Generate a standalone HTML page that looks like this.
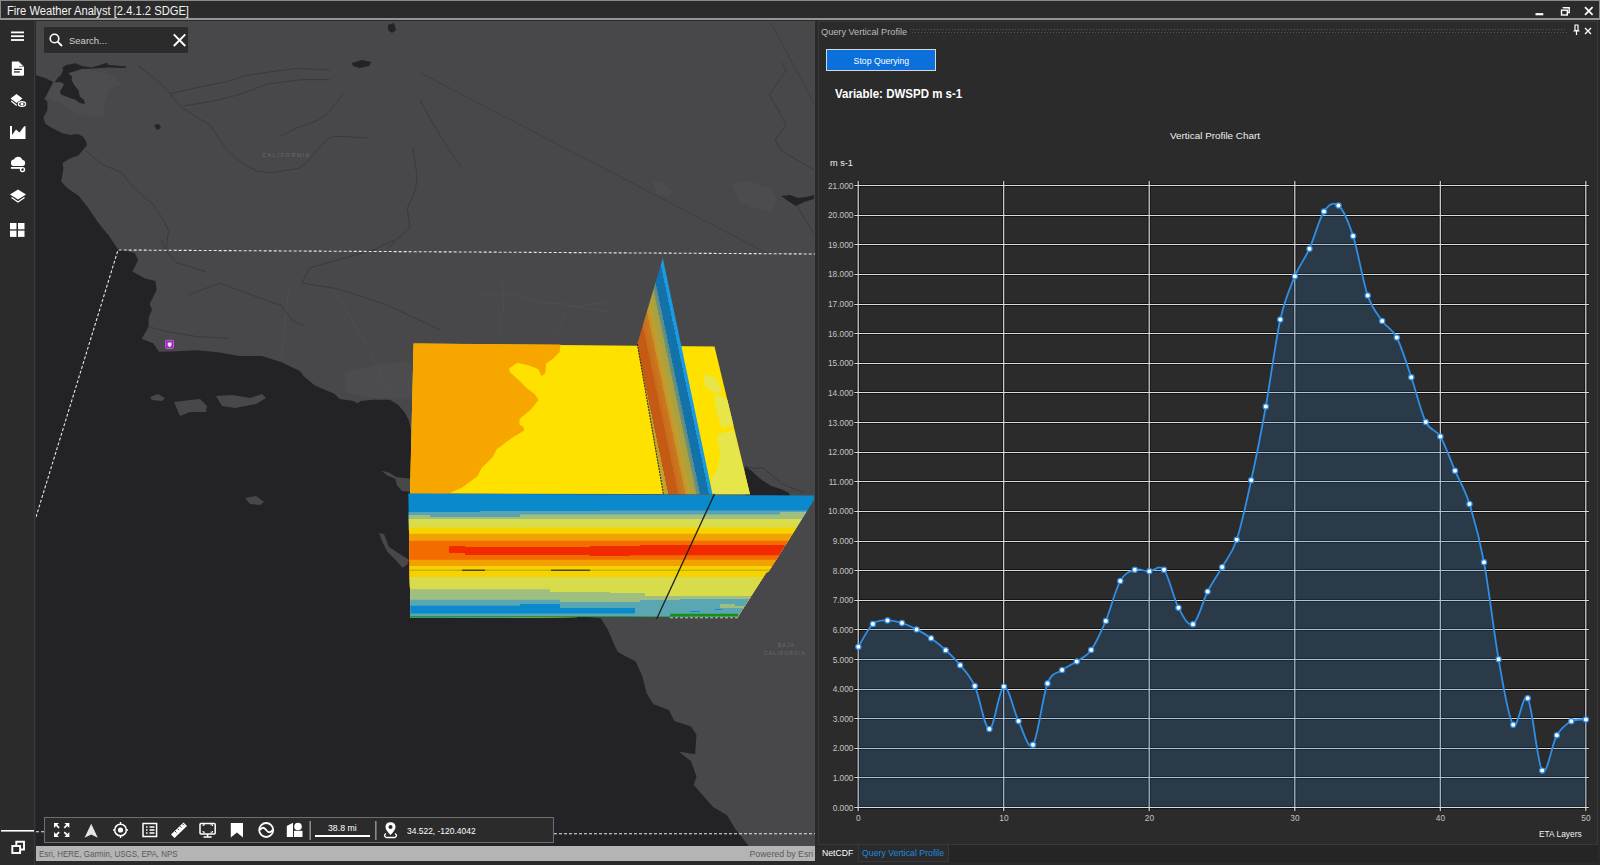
<!DOCTYPE html>
<html><head><meta charset="utf-8">
<style>
*{box-sizing:border-box}
html,body{margin:0;padding:0}
body{width:1600px;height:865px;position:relative;overflow:hidden;background:#2a2a2a;font-family:"Liberation Sans",sans-serif}
.abs{position:absolute}
.yl{font-family:"Liberation Sans",sans-serif;font-size:8.3px;fill:#c4c4c4}
.t{position:absolute;white-space:nowrap;line-height:1}
#title{left:0;top:0;width:1600px;height:20px;background:#2b2b2b;border:1px solid #8a8a8a;border-bottom:2px solid #959595}
#sidebar{left:0;top:20px;width:35px;height:845px;background:#2b2b2b;border-right:1px solid #39393c}
#mapwrap{left:36px;top:21px;width:779px;height:825px;overflow:hidden;background:#48484b}
#attr{left:36px;top:846px;width:779px;height:15px;background:#b4b4b4;font-size:9.5px;color:#5a5a5a}
#panel{left:818px;top:21px;width:780px;height:824px;background:#2b2b2b;border:1px solid #39393c}
#search{left:44px;top:27px;width:144px;height:26px;background:#2b2b2b}
#toolbar{left:44px;top:817px;width:510px;height:26px;background:#2b2b2b;border:1.5px solid #6e6e6e}
#btn{left:826px;top:49px;width:110px;height:22px;background:#0b6fdc;border:1.5px solid #d6d6d6;color:#fff;font-size:9.5px;text-align:center;line-height:21px}
#btn span{display:inline-block;transform:scaleX(0.915)}
#tabs{left:818px;top:845px;width:780px;height:17px;background:#252526}
</style></head><body>
<div id="title" class="abs"><span class="t" style="left:6px;top:4px;font-size:12.5px;color:#f2f2f2;transform:scaleX(0.895);transform-origin:0 0">Fire Weather Analyst [2.4.1.2 SDGE]</span>
<svg class="abs" style="left:0;top:0" width="1600" height="20" viewBox="0 0 1600 20">
<path d="M1534.5,13.2 H1542.3" stroke="#fff" stroke-width="2.2"/>
<g fill="none" stroke="#fff" stroke-width="1.4"><rect x="1560.5" y="9.2" width="5.8" height="4.8"/><path d="M1562.3,7.3 V6.7 H1568.2 V11.5 H1566.5"/></g>
<path d="M1584,6.2 L1591.6,13.8 M1591.6,6.2 L1584,13.8" stroke="#fff" stroke-width="1.7"/>
</svg>
</div>
<div id="sidebar" class="abs">
<svg class="abs" style="left:0;top:-20px" width="35" height="865" viewBox="0 0 35 865">
<g fill="#fff">
<rect x="11" y="31.5" width="13" height="1.8"/><rect x="11" y="35.3" width="13" height="1.8"/><rect x="11" y="39.1" width="13" height="1.8"/>
<path d="M12.5,61.5 H19 L24,66.5 V74.5 Q24,75.8 22.8,75.8 H13 Q11.8,75.8 11.8,74.5 V62.8 Q11.8,61.5 12.5,61.5 Z"/>
<path d="M10.5,98.5 L16.5,94 L22.5,98.5 L16.5,103 Z"/>
<path d="M10.8,101.6 L11.6,100.6 L17.2,104.9 L16.4,105.9 Z"/>
<path d="M10,126 L12,126 L12,135 L16,129.5 L19.5,132.5 L24,126.5 L25.5,126 L25.5,139 L10,139 Z"/>
<path d="M11,163 Q10.7,159.7 13.8,159.4 Q15,156.8 18,156.8 Q21.3,156.8 22.3,159.8 Q25.1,160.3 25.1,163 Q25.1,165.9 22.5,165.9 H13.5 Q10.9,165.9 11,163 Z"/>
<rect x="10.9" y="167" width="11.3" height="1.8"/>
<path d="M16.5,189.5 L24.5,194.5 L16.5,199.5 L8.5,194.5 Z" transform="translate(1.5,0)"/>
<rect x="10" y="223" width="6.5" height="6.3"/><rect x="18" y="223" width="6.5" height="6.3"/><rect x="10" y="230.6" width="6.5" height="6.3"/><rect x="18" y="230.6" width="6.5" height="6.3"/>
<rect x="1" y="830" width="33" height="1.6"/>
</g>
<g fill="#2b2b2b">
<path d="M19,61.5 V66.5 H24 Z" fill="#2b2b2b"/>
<rect x="14" y="68.7" width="7.8" height="1.3"/><rect x="14" y="71.3" width="5.8" height="1.3"/>
</g>
<path d="M19,62 V66 H23" fill="#fff" stroke="none"/>
<g fill="none" stroke="#fff" stroke-width="1.3">
<ellipse cx="22" cy="104" rx="3.6" ry="2.4" fill="#2b2b2b"/>
<circle cx="22" cy="104" r="0.9" fill="#fff"/>
<circle cx="22.5" cy="169.6" r="2" stroke-width="1.4"/>
<path d="M11.5,197.5 L18,202 L24.5,197.5"/>
</g>
<g fill="none" stroke="#fff" stroke-width="1.9">
<rect x="12.3" y="846" width="7.8" height="7"/><path d="M16.3,845.5 V841.8 H24 V849.5 H20.5"/>
</g>
</svg>
</div>
<div id="mapwrap" class="abs">
<svg width="779" height="825" viewBox="36 21 779 825" style="position:absolute;left:0;top:0">
<rect x="36" y="21" width="779" height="825" fill="#48484b"/>
<!-- urban patches -->
<g fill="#4c4c4f">
<path d="M70.3,69.6 L88,69.6 L108.8,73.7 L121.3,84.1 L108.8,90.4 L103.6,105 L105.7,113.3 L100.5,117.4 L88,116.4 L75.5,113.3 L61,102.9 L48.5,98.7 L46.4,94.5 L53.7,82.1 Z"/>
<path d="M731,183 L750,181 L770,188 L778,200 L772,211 L752,208 L738,200 Z"/>
<path d="M653,181 L662,182 L672,192 L668,197 L656,193 Z"/>
<path d="M345,372 L375,366 L395,362 L412,362 L412,398 L370,398 L345,392 Z"/>
</g>
<!-- ocean -->
<path fill="#232227" d="M36,75.3 L42.2,76.9 L46.4,78.4 L53.2,82.1 L51.6,85.2 L47.4,93.5 L44.3,98.7 L47.4,101.8 L47.4,110.2 L43.3,117.4 L45.4,123.7 L51.6,127.8 L62,133 L70.3,135.1 L77.6,134.1 L82.8,136.2 L86,141.4 L87,145 L78.6,155.2 L69.3,158.7 L62.4,163.3 L63.5,167.9 L61.2,181.8 L68.1,188.7 L78.6,195.7 L87.8,207.2 L97.1,221.1 L104,230 L109.2,236 L117.3,248.5 L134.7,253.1 L138.2,260 L132.4,271.6 L145.1,278.6 L155.5,280.9 L156.6,290.1 L149.7,304 L152,309.8 L148.6,317.9 L148.6,327.1 L141.6,338.7 L153.2,343.3 L159,351.8 L171.7,351.5 L197.1,350.3 L220.2,352.5 L238.7,356 L261.8,356 L280.3,361.8 L300,371 L303.5,375.9 L314.8,385.6 L334.2,393.7 L340,399 L353.5,401 L357.7,403.3 L360.8,401 L373.3,399.7 L390,399.7 L398.3,405 L404.5,412.2 L408.7,420 L412,434 L412,600 L600.8,618.3 L607.7,629.4 L617.4,651.6 L624.4,655.8 L635.5,661.3 L642.4,676.6 L646.6,693.2 L653.5,704.3 L668.8,709.9 L674.3,721 L691,726.5 L696.5,734.8 L695.1,754.2 L678.5,751.5 L691,761.2 L696.5,776.4 L693.7,784.8 L702,794.5 L713.1,807 L727,815.3 L735.3,829.1 L746.4,843 L752,850 L36,850 Z"/>
<!-- SF bay -->
<path fill="#232227" d="M62.5,67.5 L66.2,64.9 L75.5,63.3 L81.8,65.9 L84.9,66.4 L91.2,67.5 L98.4,65.4 L106.8,62.8 L108.8,64.9 L126,66.4 L126,68 L108.8,67.5 L92.2,68.5 L81.8,69 L71.4,72.2 L68.3,73.2 L72.4,76.9 L71.4,80 L74.5,85.2 L78.7,90.4 L79.7,96.6 L83.9,99.7 L84.9,103.9 L79.7,102.9 L75.5,99.7 L69.3,97.7 L61,94.5 L59.9,91.4 L62,88.3 L64.1,84.1 L59.9,82.1 L54.7,82.6 L56.8,78.9 L61,74.8 L63.1,70.6 Z"/>
<!-- islands -->
<g fill="#48484b">
<path d="M150,397 L158,394 L165,398 L162,401 L152,400 Z"/>
<path d="M174,402 L190,400 L200,399 L207,406 L206,412 L190,412 L180,416 Z"/>
<path d="M216,396 L232,395 L250,398 L262,394 L266,398 L256,404 L235,408 L222,406 Z"/>
<path d="M381.6,470.7 L388.8,472.4 L396.9,477.2 L410.7,478.8 L410.7,491.8 L401.8,491 L396.9,485.3 L395.3,478.8 L387.2,475.6 Z"/>
<path d="M379.1,533 L384,533.9 L388.8,546.8 L398.5,553.3 L409,559.7 L407.4,564.6 L402.6,567.8 L395.3,559.7 L387.2,551.7 L381.6,540.3 Z"/>
<path d="M245,498 L256,496 L264,502 L260,505 L250,504 Z"/>
</g>
<!-- lakes -->
<g fill="#232227">
<path d="M352,63 L362,60 L371,62 L369,66 L360,68 L353,66 Z"/>
<path d="M388,25 L394,23 L396,30 L392,33 L388,30 Z"/>
<path d="M154,125 L159,124 L161,128 L157,130 Z"/>
<path d="M781,196 L790,195 L798,198 L806,197 L814,195 L814,199 L804,202 L796,206 L788,201 Z"/>
</g>
<!-- borders / rivers -->
<g fill="none" stroke="#525256" stroke-width="0.6"><path d="M300,253 L340,300 L375,360 L390,400"/><path d="M288.8,286.9 L281.3,360"/><path d="M480,294 L518,295 L535,302 L565,304 L570,306 L610,312"/><path d="M570,307 L610,302"/><path d="M566,313 L560,325 L548,340"/><path d="M502,280 L503.5,312 L480,312"/><path d="M499.5,312 L501,340"/></g>
<g fill="none" stroke="#3b3b3e" stroke-width="0.8">
<path d="M420,72.7 L766.7,253"/>
<path d="M770.9,22.8 L813.9,103.2"/>

</g>
<g fill="none" stroke="#353538" stroke-width="0.75">
<path d="M138.2,65.8 L157.6,81 L168.7,92.1 L179.8,106 L196.4,117.1 L210.3,125.4 L221.4,142 L229.7,153.1 L243.6,164.2 L257.5,171.2 L271.3,172.6 L299.1,168.4 L307.4,161.5 L324,142 L332.3,136.5 L343.4,136.5 L368.4,137.9"/>
<path d="M170,93.5 L202,86.6 L229.7,81 L246.4,75.5 L274.1,71.3 L296.3,68.5 L329.6,69.9"/>
<path d="M182.6,106 L210.3,101.8 L238,94.9 L268.6,83.8 L301.8,79.6 L329.6,79.6"/>
<path d="M343.4,93.5 L329.6,111.5 L318.5,119.9 L296.3,128.2 L279.7,136.5"/>
<path d="M85.5,150.4 L102.1,164.2 L121.5,172.6 L132.6,186.4 L141,194.8 L152,203.1 L163.2,219.7 L168.7,230.8 L165.9,250.2"/>
<path d="M412.8,147.6 L417,175.3 L415.6,189.2 L407.3,208.6 L410,228 L393.4,241.9 L385,253"/>
<path d="M420,100.4 L433.9,125.4 L447.7,147.6 L461.6,167"/>
<path d="M780.6,61.6 L786.2,69.9 L769.5,94.9 L780.6,114.3 L786.2,125.4 L775.1,139.3 L780.6,150.4 L813.9,169.8"/>
<path d="M797,206 L814,233.6"/>
<path d="M187.5,295.3 L219.4,283.1 L255,296.3 L281.3,305.6 L292.5,320.6 L303.8,325.3"/>
<path d="M150,327.2 L168.8,331.9 L196.9,336.6 L228.8,338.4"/>
<path d="M161.3,240 L165,249.4 L176.3,262.5 L206.3,271.9"/>
<path d="M393.8,240 L375,249.4 L309.4,268.1 L301.9,283.1 L337.5,288.8 L384.4,303.8 L440.6,330"/>
</g>
<!-- labels -->
<text x="262" y="157" font-family="Liberation Sans" font-size="5.5" letter-spacing="1.6" fill="#6a6a6e">CALIFORNIA</text>
<text x="778" y="647" font-family="Liberation Sans" font-size="5" letter-spacing="1.2" fill="#6a6a6e">BAJA</text>
<text x="764" y="655" font-family="Liberation Sans" font-size="5" letter-spacing="1.2" fill="#6a6a6e">CALIFORNIA</text>
<!-- dashed extent -->
<path d="M36,517 L118,250 L816,254" fill="none" stroke="#e8e8e8" stroke-width="1.1" stroke-dasharray="3,2"/>
<path d="M36,831.8 L44,831.8 M554,833.8 L816,833.8" fill="none" stroke="#e8e8e8" stroke-width="1.1" stroke-dasharray="3,2"/>
<defs>
<clipPath id="fs"><path d="M408.3,493.5 L814,495.5 L814,500 L769,571 L766,573 L738,616.5 L410.5,617.5 Z"/></clipPath>
<linearGradient id="vg" gradientUnits="userSpaceOnUse" x1="712.5" y1="494.2" x2="665.5" y2="504.1">
<stop offset="0" stop-color="#1a9ae0"/><stop offset="0.07" stop-color="#1a9ae0"/>
<stop offset="0.07" stop-color="#1472aa"/><stop offset="0.25" stop-color="#1472aa"/>
<stop offset="0.25" stop-color="#4f8a90"/><stop offset="0.33" stop-color="#7a9470"/>
<stop offset="0.33" stop-color="#a8a040"/><stop offset="0.45" stop-color="#b0a23c"/>
<stop offset="0.45" stop-color="#c0a030"/><stop offset="0.55" stop-color="#c49428"/>
<stop offset="0.55" stop-color="#cc7a20"/><stop offset="0.7" stop-color="#c86a1c"/>
<stop offset="0.7" stop-color="#c45a14"/><stop offset="0.9" stop-color="#c45a14"/>
<stop offset="0.9" stop-color="#bca02c"/><stop offset="1" stop-color="#c0a82e"/>
</linearGradient>
</defs>
<path fill="#232227" d="M744.9,466.4 L751.5,470.7 L755.9,475.1 L762.5,480.6 L771.3,486.1 L782.2,489.4 L788.8,492.7 L790,496 L745,496 Z"/>
<path d="M744.9,466.4 L753.7,468.5 L762.5,467.5 L771.3,475 L782,484 L804,492.7" fill="none" stroke="#333336" stroke-width="0.8"/>
<!-- flat slice -->
<path fill="#ffe100" d="M413.6,343.6 L714.5,346.4 L750,494.3 L410,493.6 Z"/>
<path fill="#f7a600" d="M413.6,343.6 L560.5,344.5 L559.5,352.2 L553.8,357.9 L546.2,363.6 L545.2,373.2 L541.4,376.0 L538.5,369.3 L529.0,365.5 L517.6,362.7 L509.0,368.4 L509.9,372.2 L519.5,380.8 L527.1,388.4 L534.7,394.1 L538.5,399.9 L530.9,409.4 L519.5,418.9 L519.5,424.7 L523.3,426.6 L524.2,430.4 L511.8,438.0 L496.6,449.5 L492.8,457.1 L481.3,468.5 L477.5,476.2 L462.2,487.6 L448.9,493.6 L410.0,493.6 Z"/>
<path fill="#e6e64a" d="M704,374 L716,378 L722,392 L712,392 L704,385 Z"/>
<path fill="#e6e64a" d="M714,392 L727.4,400 L733.4,425 L722,428 L716,410 Z"/>
<path fill="#e6e64a" d="M717,435 L734,430 L750,494.3 L712.5,494.2 L711,478 L717,470 L720,455 Z"/>
<!-- vertical slice -->
<path fill="url(#vg)" d="M662.8,258.1 L712.5,494.2 L663.4,494.2 L637.3,344 Z"/>
<path d="M637.3,344 L663.4,494.2" stroke="#222" stroke-width="1" stroke-dasharray="2,1"/>
<!-- front slice -->
<g clip-path="url(#fs)">
<path fill="#0b89cd" d="M400,490 H820 V620 H400 Z"/>
<path fill="#58a4b4" d="M400,512 L480,512 L480,511 L600,511 L600,510.5 L820,510.5 V620 H400 Z"/>
<path fill="#9fc080" d="M400,515 L430,515 L430,517 L520,517 L520,514.5 L780,514.5 L780,512 L820,512 V620 H400 Z"/>
<path fill="#d9dc4b" d="M400,519 H820 V620 H400 Z"/>
<path fill="#f5d400" d="M400,527.5 H820 V620 H400 Z"/>
<path fill="#f2a100" d="M400,533.8 H820 V620 H400 Z"/>
<path fill="#f26c00" d="M400,540.7 H820 V620 H400 Z"/>
<path fill="#f12a00" d="M449,546 L465,546 L465,547 L590,547 L590,546 L640,546 L640,545 L820,545 L820,555.5 L630,555.5 L630,556 L590,556 L590,555 L465,555 L465,553 L449,553 Z"/>
<path fill="#f26c00" d="M400,555.3 L449,555.3 L449,553 L465,553 L465,555 L590,555 L590,556 L630,556 L630,555.5 L820,555.5 V620 H400 Z"/>
<path fill="#f1a000" d="M400,559.8 H820 V620 H400 Z"/>
<path fill="#f5d200" d="M400,566 H820 V620 H400 Z"/>
<path fill="#d8dc4a" d="M400,577.1 H820 V620 H400 Z"/>
<path fill="#9ebf80" d="M400,589.3 L550,589.3 L550,592 L610,592 L610,593 L645,593 L645,596 L820,596 V620 H400 Z"/>
<path fill="#5aa6b2" d="M400,599.7 L560,599.7 L560,602 L640,602 L640,600 L680,600 L680,599 L820,599 V620 H400 Z"/>
<path fill="#0b89cd" d="M400,605.8 L520,605.8 L520,604 L560,604 L560,608 L635,608 L635,620 L400,620 Z"/>
<path fill="#5aa6b2" d="M400,613.6 L635,613.6 V620 H400 Z"/>
<path fill="#14901c" d="M400,616.2 H670 V613.8 H738 V620 H400 Z"/>
<path fill="#9ebf80" d="M720,604 L735,604 L735,606 L745,606 L745,608 L720,608 Z"/>
<path fill="#0b89cd" d="M690,611 L700,611 L700,612 L690,612 Z M715,609 L722,609 L722,610 L715,610 Z"/>
<path d="M410,570.2 L770,570.2" stroke="#3a3a20" stroke-width="0.7" opacity="0.45"/><path d="M462,570.2 L485,570.2 M551,570.2 L590,570.2" stroke="#1a1a1a" stroke-width="1"/>
</g>
<path d="M714.5,494 L656.6,619" stroke="#1c1c1c" stroke-width="1.3"/>
<path d="M670,617.8 L738,617.8" stroke="#e8e8e8" stroke-width="1" stroke-dasharray="3,2" opacity="0.8"/>

<!-- purple marker -->
<rect x="165.6" y="340.3" width="7.9" height="8.2" rx="1" fill="#a322cb" stroke="#c46ae0" stroke-width="0.8"/>
<path d="M167.7,342.4 h3.8 v3.2 l-1.9,1.6 l-1.9,-1.6 z" fill="#e6eee0"/>
</svg>

</div>
<div id="search" class="abs">
<svg class="abs" style="left:0;top:0" width="144" height="26">
<circle cx="10.5" cy="11.5" r="4.3" fill="none" stroke="#fff" stroke-width="1.6"/><path d="M13.6,14.6 L18,19" stroke="#fff" stroke-width="1.8"/>
<path d="M129.8,7.3 L141.3,19 M141.3,7.3 L129.8,19" stroke="#fff" stroke-width="1.9"/>
</svg>
<span class="t" style="left:25px;top:9px;font-size:9.5px;color:#d0d0d0">Search...</span>
</div>
<div id="toolbar" class="abs">
<svg class="abs" style="left:-45.5px;top:-818px" width="560" height="865" viewBox="0 0 560 865">
<g fill="#fff" stroke="none">
<path d="M54,823 h5 l-1.8,1.8 l2.5,2.5 l-1.2,1.2 l-2.5,-2.5 l-1.9,1.9 Z"/>
<path d="M69.4,823 h-5 l1.8,1.8 l-2.5,2.5 l1.2,1.2 l2.5,-2.5 l1.9,1.9 Z"/>
<path d="M54,837 h5 l-1.8,-1.8 l2.5,-2.5 l-1.2,-1.2 l-2.5,2.5 l-1.9,-1.9 Z"/>
<path d="M69.4,837 h-5 l1.8,-1.8 l-2.5,-2.5 l1.2,-1.2 l2.5,2.5 l1.9,-1.9 Z"/>
<path d="M91.2,823.8 L97.8,837.8 L91.2,834.5 L84.6,837.8 Z" fill="#e6e6e6"/>
<circle cx="120.5" cy="830" r="2.6"/>
<path d="M113,829.3 h2 v1.4 h-2 Z M126,829.3 h2 v1.4 h-2 Z M119.8,822 h1.4 v2 h-1.4 Z M119.8,836 h1.4 v2 h-1.4 Z"/>
<path d="M171,834.5 L183.5,822.5 L187,826 L174.5,838 Z"/>
<path d="M230.8,823 H243 V837.5 L236.9,832.5 L230.8,837.5 Z"/>
<circle cx="298" cy="826.5" r="3.8"/>
<path d="M286.8,826 L293,822.8 V837 H286.8 Z"/>
<path d="M294,830.8 H302.5 V837 H294 Z"/>
<path d="M315,835 H370 V837 H315 Z"/>
<path d="M390.5,822.3 Q395.5,822.3 395.5,827 Q395.5,830 390.5,835 Q385.5,830 385.5,827 Q385.5,822.3 390.5,822.3 Z M390.5,825 A2,2 0 1 0 390.51,825 Z" fill-rule="evenodd"/>
</g>
<g fill="none" stroke="#fff" stroke-width="1.5">
<circle cx="120.5" cy="830" r="5.8"/>
<rect x="143" y="823.5" width="13.6" height="13"/>
<path d="M146,827 h1.5 M149.5,827 h5 M146,830 h1.5 M149.5,830 h5 M146,833 h1.5 M149.5,833 h5" stroke-width="1.3"/>
<rect x="200" y="823.5" width="15.2" height="10.5" rx="1"/>
<path d="M207.6,834 V836.5 M203.5,837 H211.7"/>
<circle cx="266.2" cy="830" r="7" stroke-width="1.8"/>
<path d="M260,830 Q263,825.5 266.2,830 Q269.4,834.5 272.5,830" stroke-width="1.8"/>
<path d="M386,833.5 Q383,835.5 386,837.5 H395 Q398,835.5 395,833.5" stroke-width="1.4"/>
</g>
<g stroke="#2b2b2b" stroke-width="0.9">
<path d="M175,831 l1.5,1.5 M177.5,828.6 l1.5,1.5 M180,826.2 l1.5,1.5 M182.5,823.8 l1.5,1.5"/>
</g>
<path d="M203,826 v-1.2 h2 M212.5,826 v-1.2 h-2 M203,831 v1.2 h2 M212.5,831 v1.2 h-2" fill="none" stroke="#fff" stroke-width="1"/>
<path d="M310.2,821 V840 M375.8,821 V840" stroke="#8a8a8a" stroke-width="1.6"/>
</svg>
<span class="t" style="left:283px;top:5px;font-size:9.5px;color:#fff;transform:scaleX(0.92);transform-origin:0 0">38.8 mi</span>
<span class="t" style="left:362px;top:7.5px;font-size:9.5px;color:#fff;transform:scaleX(0.89);transform-origin:0 0">34.522, -120.4042</span>
</div>
<div id="attr" class="abs"><span class="t" style="left:3px;top:3px;transform:scaleX(0.84);transform-origin:0 0">Esri, HERE, Garmin, USGS, EPA, NPS</span><span class="t" style="right:1.5px;top:3px;transform:scaleX(0.92);transform-origin:100% 0">Powered by Esri</span></div>
<div id="panel" class="abs">
<span class="t" style="left:2px;top:5px;font-size:9.5px;color:#bdbdbd;transform:scaleX(0.965);transform-origin:0 0">Query Vertical Profile</span>
<div class="abs" style="left:90px;top:5.5px;width:656px;height:3px;background-image:radial-gradient(circle at 1.5px 1.5px,#585858 0.75px,transparent 1px);background-size:3px 3px"></div><div class="abs" style="left:91.5px;top:8.5px;width:656px;height:3px;background-image:radial-gradient(circle at 1.5px 1.5px,#585858 0.75px,transparent 1px);background-size:3px 3px"></div>
<svg class="abs" style="left:750px;top:-1px" width="28" height="20">
<path d="M5.5,4 H9.5 M6,4 V9.5 H9 V4 M4.5,10 H10.5 M7.5,10 V14" fill="none" stroke="#fff" stroke-width="1.2"/>
<path d="M16,7 L22,13 M22,7 L16,13" stroke="#fff" stroke-width="1.3"/>
</svg>
<span class="t" style="left:16px;top:66px;font-size:12.5px;font-weight:bold;color:#fff;transform:scaleX(0.92);transform-origin:0 0">Variable: DWSPD m s-1</span>
<span class="t" style="left:351px;top:109px;font-size:9.9px;color:#f0f0f0">Vertical Profile Chart</span>
<span class="t" style="left:11px;top:137px;font-size:9.2px;color:#f0f0f0">m s-1</span>
<span class="t" style="left:720px;top:807px;font-size:9.5px;color:#f0f0f0;transform:scaleX(0.88);transform-origin:0 0">ETA Layers</span>
</div>
<div id="btn" class="abs"><span>Stop Querying</span></div>
<div id="tabs" class="abs">
<div class="abs" style="left:0;top:0;width:40px;height:17px;background:#2b2b2b"><span class="t" style="left:4px;top:3px;font-size:9.5px;color:#fff;transform:scaleX(0.91);transform-origin:0 0">NetCDF</span></div>
<div class="abs" style="left:40px;top:0;width:91px;height:17px;background:#2b2b2b;border:1px solid #39393c;border-top:none"><span class="t" style="left:3px;top:3px;font-size:9.5px;color:#1e88e0;transform:scaleX(0.92);transform-origin:0 0">Query Vertical Profile</span></div>
</div>
<svg width="1600" height="865" style="position:absolute;left:0;top:0">
<path d="M854.4,807.5H1588.9 M854.4,777.5H1588.9 M854.4,748.5H1588.9 M854.4,718.5H1588.9 M854.4,689.5H1588.9 M854.4,659.5H1588.9 M854.4,629.5H1588.9 M854.4,600.5H1588.9 M854.4,570.5H1588.9 M854.4,541.5H1588.9 M854.4,511.5H1588.9 M854.4,481.5H1588.9 M854.4,452.5H1588.9 M854.4,422.5H1588.9 M854.4,392.5H1588.9 M854.4,363.5H1588.9 M854.4,333.5H1588.9 M854.4,304.5H1588.9 M854.4,274.5H1588.9 M854.4,244.5H1588.9 M854.4,215.5H1588.9 M854.4,185.5H1588.9 M858.2,181.1V811.1 M1003.7,181.1V811.1 M1149.2,181.1V811.1 M1294.8,181.1V811.1 M1440.3,181.1V811.1 M1585.8,181.1V811.1" stroke="#000" stroke-width="3" fill="none" opacity="0.55"/>
<path d="M854.4,807.5H1588.9 M854.4,777.5H1588.9 M854.4,748.5H1588.9 M854.4,718.5H1588.9 M854.4,689.5H1588.9 M854.4,659.5H1588.9 M854.4,629.5H1588.9 M854.4,600.5H1588.9 M854.4,570.5H1588.9 M854.4,541.5H1588.9 M854.4,511.5H1588.9 M854.4,481.5H1588.9 M854.4,452.5H1588.9 M854.4,422.5H1588.9 M854.4,392.5H1588.9 M854.4,363.5H1588.9 M854.4,333.5H1588.9 M854.4,304.5H1588.9 M854.4,274.5H1588.9 M854.4,244.5H1588.9 M854.4,215.5H1588.9 M854.4,185.5H1588.9 M858.2,181.1V811.1 M1003.7,181.1V811.1 M1149.2,181.1V811.1 M1294.8,181.1V811.1 M1440.3,181.1V811.1 M1585.8,181.1V811.1" stroke="#dcdcdc" stroke-width="1.2" fill="none"/>
<path d="M858.4,646.7 C860.8,642.9 868.1,628.3 872.9,623.9 C877.8,619.5 882.6,620.5 887.5,620.4 C892.4,620.2 897.2,621.5 902.0,623.0 C906.9,624.5 911.8,626.9 916.6,629.4 C921.5,631.9 926.3,634.8 931.1,638.3 C936.0,641.8 940.9,645.7 945.7,650.2 C950.6,654.7 955.4,659.2 960.2,665.2 C965.1,671.2 969.9,675.4 974.8,686.0 C979.6,696.6 984.5,728.9 989.4,729.0 C994.2,729.1 999.0,687.9 1003.9,686.6 C1008.8,685.3 1013.6,711.3 1018.5,721.0 C1023.3,730.7 1028.2,751.0 1033.0,744.7 C1037.8,738.4 1042.7,695.8 1047.5,683.4 C1052.4,671.0 1057.2,673.8 1062.1,670.1 C1066.9,666.4 1071.8,664.8 1076.7,661.4 C1081.5,658.0 1086.4,656.6 1091.2,649.9 C1096.0,643.1 1100.9,632.4 1105.8,620.9 C1110.6,609.4 1115.5,589.4 1120.3,580.9 C1125.1,572.4 1130.0,571.4 1134.8,569.8 C1139.7,568.2 1144.6,571.2 1149.4,571.2 C1154.2,571.2 1159.1,563.7 1164.0,569.8 C1168.8,575.9 1173.7,598.6 1178.5,607.7 C1183.3,616.8 1188.2,626.9 1193.0,624.2 C1197.9,621.5 1202.8,601.1 1207.6,591.6 C1212.4,582.1 1217.3,575.7 1222.2,567.1 C1227.0,558.5 1231.9,554.3 1236.7,539.8 C1241.5,525.3 1246.4,502.5 1251.2,480.3 C1256.1,458.1 1261.0,433.3 1265.8,406.5 C1270.6,379.7 1275.5,341.2 1280.3,319.5 C1285.2,297.8 1290.1,288.0 1294.9,276.2 C1299.8,264.4 1304.6,259.5 1309.5,248.7 C1314.3,237.9 1319.2,218.7 1324.0,211.5 C1328.8,204.3 1333.7,201.4 1338.5,205.5 C1343.4,209.6 1348.2,221.0 1353.1,236.0 C1357.9,251.0 1362.8,281.2 1367.7,295.4 C1372.5,309.5 1377.4,313.9 1382.2,320.9 C1387.0,327.9 1391.9,328.1 1396.8,337.5 C1401.6,346.9 1406.5,363.2 1411.3,377.3 C1416.1,391.4 1421.0,412.1 1425.8,422.0 C1430.7,431.9 1435.6,428.4 1440.4,436.5 C1445.2,444.6 1450.1,459.4 1455.0,470.7 C1459.8,481.9 1464.7,488.7 1469.5,504.0 C1474.3,519.3 1479.2,536.4 1484.0,562.3 C1488.9,588.2 1493.8,632.2 1498.6,659.3 C1503.4,686.4 1508.3,718.2 1513.2,724.7 C1518.0,731.2 1522.9,690.6 1527.7,698.3 C1532.5,705.9 1537.4,764.4 1542.2,770.6 C1547.1,776.8 1552.0,743.5 1556.8,735.3 C1561.7,727.1 1566.5,723.8 1571.3,721.2 C1576.2,718.6 1583.5,719.8 1585.9,719.5 L1585.9,807.1 L858.4,807.1 Z" fill="rgb(39,108,169)" fill-opacity="0.23"/>
<path d="M858.4,646.7 C860.8,642.9 868.1,628.3 872.9,623.9 C877.8,619.5 882.6,620.5 887.5,620.4 C892.4,620.2 897.2,621.5 902.0,623.0 C906.9,624.5 911.8,626.9 916.6,629.4 C921.5,631.9 926.3,634.8 931.1,638.3 C936.0,641.8 940.9,645.7 945.7,650.2 C950.6,654.7 955.4,659.2 960.2,665.2 C965.1,671.2 969.9,675.4 974.8,686.0 C979.6,696.6 984.5,728.9 989.4,729.0 C994.2,729.1 999.0,687.9 1003.9,686.6 C1008.8,685.3 1013.6,711.3 1018.5,721.0 C1023.3,730.7 1028.2,751.0 1033.0,744.7 C1037.8,738.4 1042.7,695.8 1047.5,683.4 C1052.4,671.0 1057.2,673.8 1062.1,670.1 C1066.9,666.4 1071.8,664.8 1076.7,661.4 C1081.5,658.0 1086.4,656.6 1091.2,649.9 C1096.0,643.1 1100.9,632.4 1105.8,620.9 C1110.6,609.4 1115.5,589.4 1120.3,580.9 C1125.1,572.4 1130.0,571.4 1134.8,569.8 C1139.7,568.2 1144.6,571.2 1149.4,571.2 C1154.2,571.2 1159.1,563.7 1164.0,569.8 C1168.8,575.9 1173.7,598.6 1178.5,607.7 C1183.3,616.8 1188.2,626.9 1193.0,624.2 C1197.9,621.5 1202.8,601.1 1207.6,591.6 C1212.4,582.1 1217.3,575.7 1222.2,567.1 C1227.0,558.5 1231.9,554.3 1236.7,539.8 C1241.5,525.3 1246.4,502.5 1251.2,480.3 C1256.1,458.1 1261.0,433.3 1265.8,406.5 C1270.6,379.7 1275.5,341.2 1280.3,319.5 C1285.2,297.8 1290.1,288.0 1294.9,276.2 C1299.8,264.4 1304.6,259.5 1309.5,248.7 C1314.3,237.9 1319.2,218.7 1324.0,211.5 C1328.8,204.3 1333.7,201.4 1338.5,205.5 C1343.4,209.6 1348.2,221.0 1353.1,236.0 C1357.9,251.0 1362.8,281.2 1367.7,295.4 C1372.5,309.5 1377.4,313.9 1382.2,320.9 C1387.0,327.9 1391.9,328.1 1396.8,337.5 C1401.6,346.9 1406.5,363.2 1411.3,377.3 C1416.1,391.4 1421.0,412.1 1425.8,422.0 C1430.7,431.9 1435.6,428.4 1440.4,436.5 C1445.2,444.6 1450.1,459.4 1455.0,470.7 C1459.8,481.9 1464.7,488.7 1469.5,504.0 C1474.3,519.3 1479.2,536.4 1484.0,562.3 C1488.9,588.2 1493.8,632.2 1498.6,659.3 C1503.4,686.4 1508.3,718.2 1513.2,724.7 C1518.0,731.2 1522.9,690.6 1527.7,698.3 C1532.5,705.9 1537.4,764.4 1542.2,770.6 C1547.1,776.8 1552.0,743.5 1556.8,735.3 C1561.7,727.1 1566.5,723.8 1571.3,721.2 C1576.2,718.6 1583.5,719.8 1585.9,719.5" stroke="#2f8ee6" stroke-width="1.8" fill="none"/>
<circle cx="858.4" cy="646.7" r="2.6" fill="#fff" stroke="#2f8ee6" stroke-width="1.2"/>
<circle cx="872.9" cy="623.9" r="2.6" fill="#fff" stroke="#2f8ee6" stroke-width="1.2"/>
<circle cx="887.5" cy="620.4" r="2.6" fill="#fff" stroke="#2f8ee6" stroke-width="1.2"/>
<circle cx="902.0" cy="623.0" r="2.6" fill="#fff" stroke="#2f8ee6" stroke-width="1.2"/>
<circle cx="916.6" cy="629.4" r="2.6" fill="#fff" stroke="#2f8ee6" stroke-width="1.2"/>
<circle cx="931.1" cy="638.3" r="2.6" fill="#fff" stroke="#2f8ee6" stroke-width="1.2"/>
<circle cx="945.7" cy="650.2" r="2.6" fill="#fff" stroke="#2f8ee6" stroke-width="1.2"/>
<circle cx="960.2" cy="665.2" r="2.6" fill="#fff" stroke="#2f8ee6" stroke-width="1.2"/>
<circle cx="974.8" cy="686.0" r="2.6" fill="#fff" stroke="#2f8ee6" stroke-width="1.2"/>
<circle cx="989.4" cy="729.0" r="2.6" fill="#fff" stroke="#2f8ee6" stroke-width="1.2"/>
<circle cx="1003.9" cy="686.6" r="2.6" fill="#fff" stroke="#2f8ee6" stroke-width="1.2"/>
<circle cx="1018.5" cy="721.0" r="2.6" fill="#fff" stroke="#2f8ee6" stroke-width="1.2"/>
<circle cx="1033.0" cy="744.7" r="2.6" fill="#fff" stroke="#2f8ee6" stroke-width="1.2"/>
<circle cx="1047.5" cy="683.4" r="2.6" fill="#fff" stroke="#2f8ee6" stroke-width="1.2"/>
<circle cx="1062.1" cy="670.1" r="2.6" fill="#fff" stroke="#2f8ee6" stroke-width="1.2"/>
<circle cx="1076.7" cy="661.4" r="2.6" fill="#fff" stroke="#2f8ee6" stroke-width="1.2"/>
<circle cx="1091.2" cy="649.9" r="2.6" fill="#fff" stroke="#2f8ee6" stroke-width="1.2"/>
<circle cx="1105.8" cy="620.9" r="2.6" fill="#fff" stroke="#2f8ee6" stroke-width="1.2"/>
<circle cx="1120.3" cy="580.9" r="2.6" fill="#fff" stroke="#2f8ee6" stroke-width="1.2"/>
<circle cx="1134.8" cy="569.8" r="2.6" fill="#fff" stroke="#2f8ee6" stroke-width="1.2"/>
<circle cx="1149.4" cy="571.2" r="2.6" fill="#fff" stroke="#2f8ee6" stroke-width="1.2"/>
<circle cx="1164.0" cy="569.8" r="2.6" fill="#fff" stroke="#2f8ee6" stroke-width="1.2"/>
<circle cx="1178.5" cy="607.7" r="2.6" fill="#fff" stroke="#2f8ee6" stroke-width="1.2"/>
<circle cx="1193.0" cy="624.2" r="2.6" fill="#fff" stroke="#2f8ee6" stroke-width="1.2"/>
<circle cx="1207.6" cy="591.6" r="2.6" fill="#fff" stroke="#2f8ee6" stroke-width="1.2"/>
<circle cx="1222.2" cy="567.1" r="2.6" fill="#fff" stroke="#2f8ee6" stroke-width="1.2"/>
<circle cx="1236.7" cy="539.8" r="2.6" fill="#fff" stroke="#2f8ee6" stroke-width="1.2"/>
<circle cx="1251.2" cy="480.3" r="2.6" fill="#fff" stroke="#2f8ee6" stroke-width="1.2"/>
<circle cx="1265.8" cy="406.5" r="2.6" fill="#fff" stroke="#2f8ee6" stroke-width="1.2"/>
<circle cx="1280.3" cy="319.5" r="2.6" fill="#fff" stroke="#2f8ee6" stroke-width="1.2"/>
<circle cx="1294.9" cy="276.2" r="2.6" fill="#fff" stroke="#2f8ee6" stroke-width="1.2"/>
<circle cx="1309.5" cy="248.7" r="2.6" fill="#fff" stroke="#2f8ee6" stroke-width="1.2"/>
<circle cx="1324.0" cy="211.5" r="2.6" fill="#fff" stroke="#2f8ee6" stroke-width="1.2"/>
<circle cx="1338.5" cy="205.5" r="2.6" fill="#fff" stroke="#2f8ee6" stroke-width="1.2"/>
<circle cx="1353.1" cy="236.0" r="2.6" fill="#fff" stroke="#2f8ee6" stroke-width="1.2"/>
<circle cx="1367.7" cy="295.4" r="2.6" fill="#fff" stroke="#2f8ee6" stroke-width="1.2"/>
<circle cx="1382.2" cy="320.9" r="2.6" fill="#fff" stroke="#2f8ee6" stroke-width="1.2"/>
<circle cx="1396.8" cy="337.5" r="2.6" fill="#fff" stroke="#2f8ee6" stroke-width="1.2"/>
<circle cx="1411.3" cy="377.3" r="2.6" fill="#fff" stroke="#2f8ee6" stroke-width="1.2"/>
<circle cx="1425.8" cy="422.0" r="2.6" fill="#fff" stroke="#2f8ee6" stroke-width="1.2"/>
<circle cx="1440.4" cy="436.5" r="2.6" fill="#fff" stroke="#2f8ee6" stroke-width="1.2"/>
<circle cx="1455.0" cy="470.7" r="2.6" fill="#fff" stroke="#2f8ee6" stroke-width="1.2"/>
<circle cx="1469.5" cy="504.0" r="2.6" fill="#fff" stroke="#2f8ee6" stroke-width="1.2"/>
<circle cx="1484.0" cy="562.3" r="2.6" fill="#fff" stroke="#2f8ee6" stroke-width="1.2"/>
<circle cx="1498.6" cy="659.3" r="2.6" fill="#fff" stroke="#2f8ee6" stroke-width="1.2"/>
<circle cx="1513.2" cy="724.7" r="2.6" fill="#fff" stroke="#2f8ee6" stroke-width="1.2"/>
<circle cx="1527.7" cy="698.3" r="2.6" fill="#fff" stroke="#2f8ee6" stroke-width="1.2"/>
<circle cx="1542.2" cy="770.6" r="2.6" fill="#fff" stroke="#2f8ee6" stroke-width="1.2"/>
<circle cx="1556.8" cy="735.3" r="2.6" fill="#fff" stroke="#2f8ee6" stroke-width="1.2"/>
<circle cx="1571.3" cy="721.2" r="2.6" fill="#fff" stroke="#2f8ee6" stroke-width="1.2"/>
<circle cx="1585.9" cy="719.5" r="2.6" fill="#fff" stroke="#2f8ee6" stroke-width="1.2"/>
<text x="853.4" y="810.6" text-anchor="end" class="yl">0.000</text>
<text x="853.4" y="781.0" text-anchor="end" class="yl">1.000</text>
<text x="853.4" y="751.4" text-anchor="end" class="yl">2.000</text>
<text x="853.4" y="721.7" text-anchor="end" class="yl">3.000</text>
<text x="853.4" y="692.1" text-anchor="end" class="yl">4.000</text>
<text x="853.4" y="662.5" text-anchor="end" class="yl">5.000</text>
<text x="853.4" y="632.9" text-anchor="end" class="yl">6.000</text>
<text x="853.4" y="603.3" text-anchor="end" class="yl">7.000</text>
<text x="853.4" y="573.6" text-anchor="end" class="yl">8.000</text>
<text x="853.4" y="544.0" text-anchor="end" class="yl">9.000</text>
<text x="853.4" y="514.4" text-anchor="end" class="yl">10.000</text>
<text x="853.4" y="484.8" text-anchor="end" class="yl">11.000</text>
<text x="853.4" y="455.2" text-anchor="end" class="yl">12.000</text>
<text x="853.4" y="425.5" text-anchor="end" class="yl">13.000</text>
<text x="853.4" y="395.9" text-anchor="end" class="yl">14.000</text>
<text x="853.4" y="366.3" text-anchor="end" class="yl">15.000</text>
<text x="853.4" y="336.7" text-anchor="end" class="yl">16.000</text>
<text x="853.4" y="307.1" text-anchor="end" class="yl">17.000</text>
<text x="853.4" y="277.4" text-anchor="end" class="yl">18.000</text>
<text x="853.4" y="247.8" text-anchor="end" class="yl">19.000</text>
<text x="853.4" y="218.2" text-anchor="end" class="yl">20.000</text>
<text x="853.4" y="188.6" text-anchor="end" class="yl">21.000</text>
<text x="858.4" y="821.0" text-anchor="middle" class="yl">0</text>
<text x="1003.9" y="821.0" text-anchor="middle" class="yl">10</text>
<text x="1149.4" y="821.0" text-anchor="middle" class="yl">20</text>
<text x="1294.9" y="821.0" text-anchor="middle" class="yl">30</text>
<text x="1440.4" y="821.0" text-anchor="middle" class="yl">40</text>
<text x="1585.9" y="821.0" text-anchor="middle" class="yl">50</text>
</svg>
</body></html>
